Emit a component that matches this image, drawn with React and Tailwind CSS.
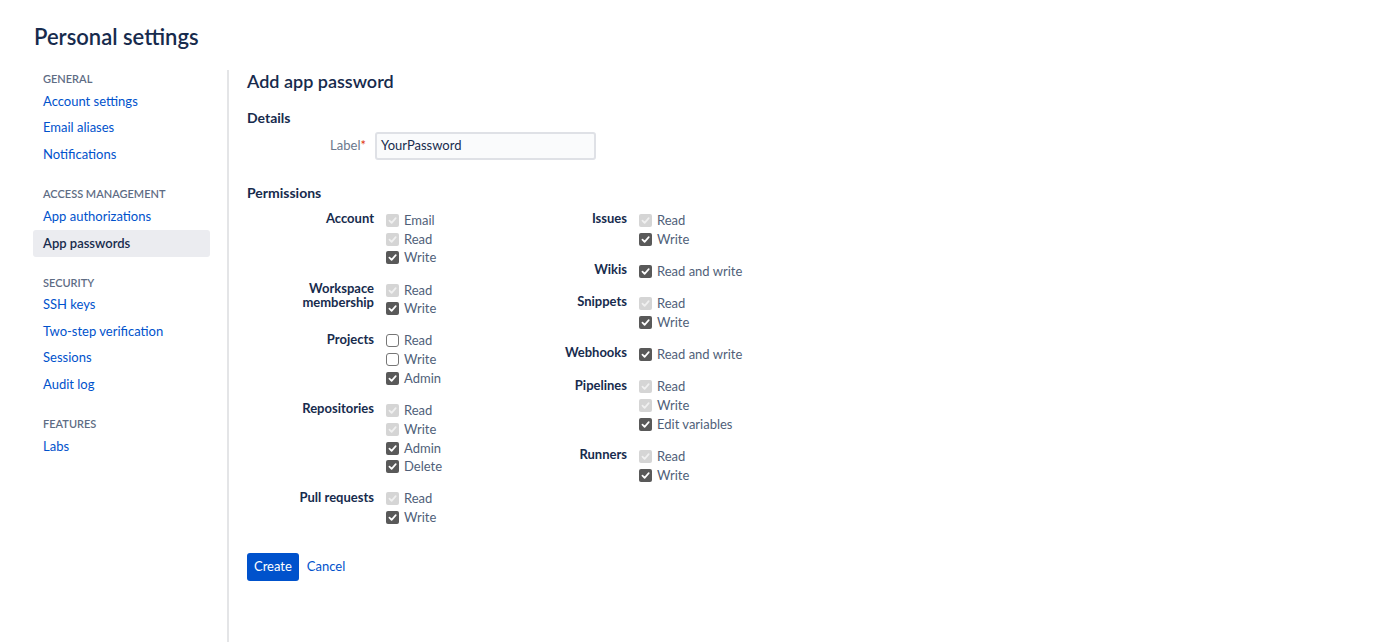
import React from "react";

const FONT = { fontFamily: 'Lato, "Noto Sans", sans-serif' };

function Box({ state }) {
  if (state === "off") {
    return <span className="w-[13px] h-[13px] rounded-[3px] border border-[#767676] bg-white shrink-0" />;
  }
  const disabled = state === "dis";
  return (
    <span
      className={
        "w-[13px] h-[13px] rounded-[2px] shrink-0 flex items-center justify-center " +
        (disabled ? "bg-[#d5d5d5]" : "bg-[#595959]")
      }
    >
      <svg width="9" height="9" viewBox="0 0 10 10">
        <path
          d="M1.6 5.2 L4 7.6 L8.6 2.4"
          fill="none"
          stroke={disabled ? "#f0f0f0" : "#ffffff"}
          strokeWidth="1.9"
          strokeLinecap="round"
          strokeLinejoin="round"
        />
      </svg>
    </span>
  );
}

function Group({ label, opts }) {
  return (
    <div className="flex">
      <div className="w-[139px] pr-[12px] text-right text-[13px] leading-[14px] font-bold text-[#172b4d]">
        {label}
      </div>
      <div className="flex flex-col">
        {opts.map(([t, s]) => (
          <div key={t} className="h-[18.7px] flex items-center gap-[5px]">
            <Box state={s} />
            <span className="text-[13px] text-[#505f79] leading-none">{t}</span>
          </div>
        ))}
      </div>
    </div>
  );
}

const left = [
  ["Account", [["Email", "dis"], ["Read", "dis"], ["Write", "on"]]],
  [<>Workspace<br />membership</>, [["Read", "dis"], ["Write", "on"]]],
  ["Projects", [["Read", "off"], ["Write", "off"], ["Admin", "on"]]],
  ["Repositories", [["Read", "dis"], ["Write", "dis"], ["Admin", "on"], ["Delete", "on"]]],
  ["Pull requests", [["Read", "dis"], ["Write", "on"]]],
];
const right = [
  ["Issues", [["Read", "dis"], ["Write", "on"]]],
  ["Wikis", [["Read and write", "on"]]],
  ["Snippets", [["Read", "dis"], ["Write", "on"]]],
  ["Webhooks", [["Read and write", "on"]]],
  ["Pipelines", [["Read", "dis"], ["Write", "dis"], ["Edit variables", "on"]]],
  ["Runners", [["Read", "dis"], ["Write", "on"]]],
];

function SideHead({ children, className = "" }) {
  return (
    <div className={"pl-[10px] text-[11px] font-semibold uppercase text-[#5e6c84] leading-[14px] " + className}>
      {children}
    </div>
  );
}
function SideLink({ children, active }) {
  return (
    <div
      className={
        "pl-[10px] h-[26.5px] flex items-center text-[13px] rounded-[3px] " +
        (active ? "bg-[#ebecf0] text-[#172b4d] font-semibold" : "text-[#0052cc]")
      }
    >
      {children}
    </div>
  );
}

export default function App() {
  return (
    <div className="w-[1400px] h-[642px] bg-white overflow-hidden" style={FONT}>
      <div className="pl-[34px] pt-[23px] h-[70px]">
        <h1 className="text-[22px] font-semibold text-[#172b4d] leading-[28px]">Personal settings</h1>
      </div>
      <div className="flex h-[572px]">
        <div className="ml-[33px] w-[177px] pt-[2px]">
          <SideHead>General</SideHead>
          <div className="mt-[2px]">
            <SideLink>Account settings</SideLink>
            <SideLink>Email aliases</SideLink>
            <SideLink>Notifications</SideLink>
          </div>
          <SideHead className="mt-[19px]">Access management</SideHead>
          <div className="mt-[3px]">
            <SideLink>App authorizations</SideLink>
            <SideLink active>App passwords</SideLink>
          </div>
          <SideHead className="mt-[19px]">Security</SideHead>
          <div className="mt-[2px]">
            <SideLink>SSH keys</SideLink>
            <SideLink>Two-step verification</SideLink>
            <SideLink>Sessions</SideLink>
            <SideLink>Audit log</SideLink>
          </div>
          <SideHead className="mt-[19px]">Features</SideHead>
          <div className="mt-[3px]">
            <SideLink>Labs</SideLink>
          </div>
        </div>
        <div className="ml-[17px] w-[2px] bg-[#e4e5e7]" />
        <div className="pl-[18px] flex-1">
          <h2 className="text-[18px] font-semibold text-[#172b4d] leading-[24px] -mt-[1px]">Add app password</h2>
          <h3 className="mt-[16px] text-[14px] font-bold text-[#172b4d] leading-[18px]">Details</h3>
          <div className="flex items-center mt-[5px]">
            <div className="w-[128px] pr-[9px] text-right text-[13px] text-[#6b778c]">
              Label<span className="text-[#de350b]">*</span>
            </div>
            <div className="w-[221px] h-[28px] border-2 border-[#dfe1e6] rounded-[3px] bg-[#fafbfc] flex items-center pl-[4px] text-[13px] text-[#172b4d]">
              YourPassword
            </div>
          </div>
          <h3 className="mt-[24px] text-[14px] font-bold text-[#172b4d] leading-[18px]">Permissions</h3>
          <div className="flex mt-[9px]">
            <div className="w-[253px] flex flex-col gap-[13.6px]">
              {left.map(([l, o], i) => (
                <Group key={i} label={l} opts={o} />
              ))}
            </div>
            <div className="flex flex-col gap-[13.6px]">
              {right.map(([l, o], i) => (
                <Group key={i} label={l} opts={o} />
              ))}
            </div>
          </div>
          <div className="flex items-center mt-[26px] gap-[8px]">
            <button className="h-[28px] px-[7px] bg-[#0052cc] text-white text-[13px] rounded-[3px]">Create</button>
            <span className="text-[13px] text-[#0052cc]">Cancel</span>
          </div>
        </div>
      </div>
    </div>
  );
}
